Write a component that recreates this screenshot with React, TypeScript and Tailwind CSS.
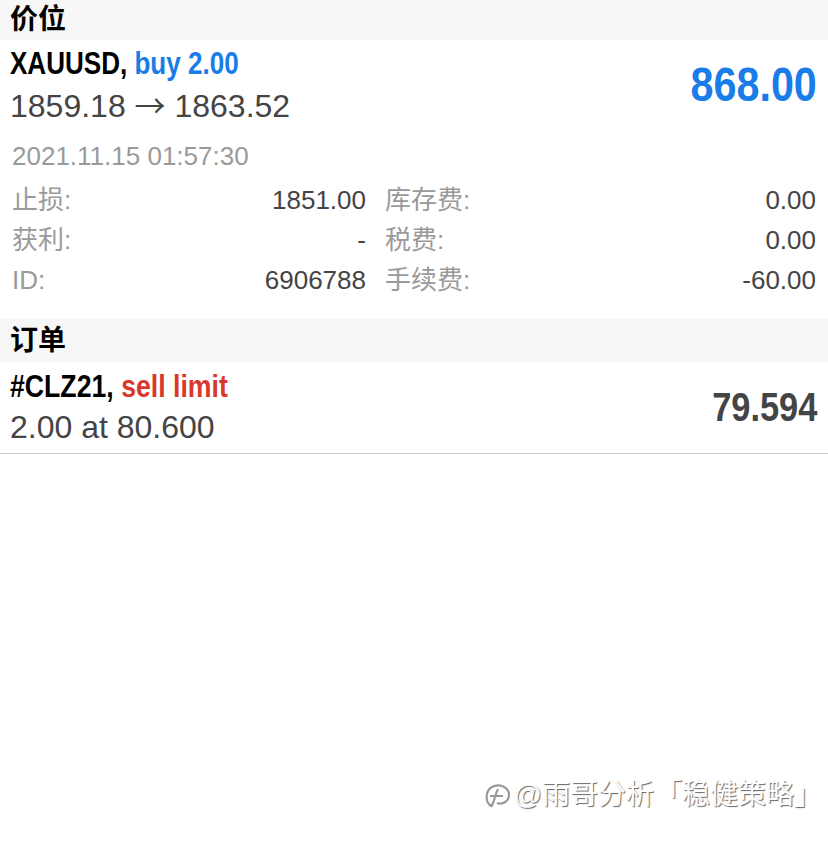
const SANS = "font-['Liberation_Sans','Noto_Sans_CJK_SC',sans-serif]";

function SectionHeader({ title, tall }: { title: string; tall?: boolean }) {
  return (
    <div
      className={`${tall ? "h-[43px]" : "h-[40px]"} bg-[#f7f7f7] px-[10px] flex items-center text-[28px] font-bold text-black ${SANS}`}
    >
      {title}
    </div>
  );
}

// condensed bold text: Liberation Sans Bold squeezed horizontally
function Narrow({ children, className }: { children: React.ReactNode; className: string }) {
  return (
    <span className={`inline-block font-bold whitespace-nowrap scale-x-[0.84] ${className}`}>
      {children}
    </span>
  );
}

function Detail({ label, value }: { label: string; value: string }) {
  return (
    <div className="flex items-center justify-between h-[40px]">
      <span className="text-[#9a9a9a]">{label}</span>
      <span className="text-[#444]">{value}</span>
    </div>
  );
}

export default function App() {
  return (
    <div className={`w-[828px] h-[842px] bg-white relative ${SANS}`}>
      <SectionHeader title="价位" />

      <div className="flex items-center justify-between pl-[10px] pr-[11px] pt-[4px]">
        <div>
          <div className="leading-[40px] h-[40px]">
            <Narrow className="text-[31px] origin-left">
              <span className="text-black">XAUUSD, </span>
              <span className="text-[#1a7ce8]">buy 2.00</span>
            </Narrow>
          </div>
          <div className="text-[32px] leading-[40px] text-[#444]">
            1859.18 <span className="font-['Noto_Sans_CJK_SC'] text-[31px]">→</span> 1863.52
          </div>
        </div>
        <Narrow className="text-[48px] text-[#1a7ce8] origin-right scale-x-[0.86]">868.00</Narrow>
      </div>

      <div className="px-[12px] pt-[15px] pb-[19px] text-[26px]">
        <div className="text-[#9a9a9a] leading-[30px]">2021.11.15 01:57:30</div>
        <div className="grid grid-cols-[354px_1fr] gap-x-[19px] mt-[9px]">
          <div>
            <Detail label="止损:" value="1851.00" />
            <Detail label="获利:" value="-" />
            <Detail label="ID:" value="6906788" />
          </div>
          <div>
            <Detail label="库存费:" value="0.00" />
            <Detail label="税费:" value="0.00" />
            <Detail label="手续费:" value="-60.00" />
          </div>
        </div>
      </div>

      <SectionHeader title="订单" tall />

      <div className="flex items-center justify-between pl-[10px] pr-[11px] pt-[5px] pb-[6px] border-b border-[#c8c8c8]">
        <div>
          <div className="leading-[40px] h-[40px]">
            <Narrow className="text-[31px] origin-left scale-x-[0.86]">
              <span className="text-black">#CLZ21, </span>
              <span className="text-[#d8392c]">sell limit</span>
            </Narrow>
          </div>
          <div className="text-[32px] leading-[40px] text-[#444]">2.00 at 80.600</div>
        </div>
        <Narrow className="text-[40px] text-[#444] origin-right scale-x-[0.86]">79.594</Narrow>
      </div>

      <div className="absolute right-[6px] top-[774px] flex items-center gap-[1px] text-[28px] text-white [text-shadow:1px_1px_1px_rgba(0,0,0,0.6)]">
        <svg width="30" height="32" viewBox="0 0 30 32" fill="none" stroke="#999" strokeWidth="2.2">
          <path d="M8 27 C2 23 2 12 9 8 C16 4 26 8 26 16 C26 22 20 26 14 24" />
          <path d="M7 17 H20 M15 10 C12 15 12 22 8 28" />
        </svg>
        <span>@雨哥分析「稳健策略」</span>
      </div>
    </div>
  );
}
